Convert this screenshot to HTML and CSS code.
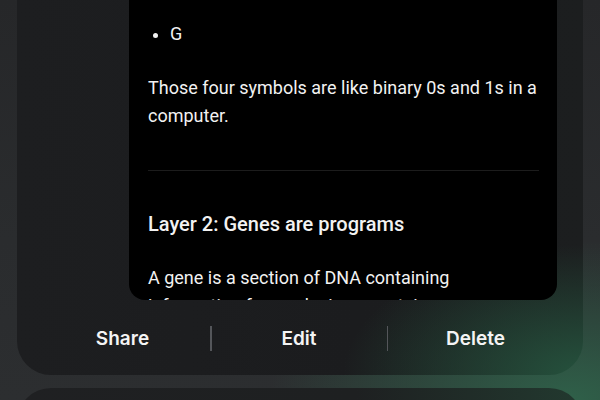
FILE: index.html
```html
<!DOCTYPE html>
<html lang="en">
<head>
<meta charset="utf-8">
<title>Note</title>
<link rel="stylesheet" href="styles.css">
</head>
<body>
  <div class="screen">
    <section class="note-panel">
      <article class="note-card">
        <ul class="note-list">
          <li>G</li>
        </ul>
        <p class="note-text">Those four symbols are like binary 0s and 1s in a computer.</p>
        <hr class="note-rule">
        <h2 class="note-heading">Layer 2: Genes are programs</h2>
        <p class="note-text">A gene is a section of DNA containing information for producing a protein.</p>
      </article>
      <nav class="note-actions">
        <button class="action">Share</button>
        <span class="action-sep"></span>
        <button class="action">Edit</button>
        <span class="action-sep"></span>
        <button class="action">Delete</button>
      </nav>
    </section>
    <section class="next-panel"></section>
  </div>
</body>
</html>
```

FILE: styles.css
```css
html, body {
  margin: 0;
  padding: 0;
  height: 100%;
}

body {
  overflow: hidden;
  background:
    radial-gradient(ellipse 300px 160px at 95% 100%, #2f6049 0%, rgba(47, 96, 73, 0.55) 45%, rgba(47, 96, 73, 0) 100%),
    linear-gradient(180deg, #262729 0%, #2a2c2e 60%, #2c2e30 100%);
  font-family: Roboto, "Noto Sans", sans-serif;
  color: #f2f2f2;
}

.screen {
  display: flex;
  flex-direction: column;
  gap: 13px;
}

.note-panel {
  margin: 0 17px;
  height: 375px;
  display: flex;
  flex-direction: column;
  border-radius: 0 0 34px 34px;
  background:
    radial-gradient(ellipse 240px 130px at 100% 100%, #25523d 0%, rgba(37, 82, 61, 0.55) 45%, rgba(37, 82, 61, 0) 100%),
    linear-gradient(90deg, #1d1e20 0%, #1b1c1e 60%, #1c1e1f 100%);
}

.note-card {
  margin: 0 26px 0 112px;
  height: 300px;
  box-sizing: border-box;
  padding: 20px 18px 0 19px;
  background: #000;
  border-radius: 0 0 16px 16px;
  overflow: hidden;
}

.note-list {
  margin: 0;
  padding: 0 0 0 22px;
  font-size: 18px;
  line-height: 28px;
}

.note-list li::marker {
  font-size: 17px;
}

.note-text {
  margin: 26px 0 0;
  font-size: 18px;
  line-height: 28px;
}

.note-rule {
  margin: 40px 0 0;
  border: 0;
  height: 1px;
  background: #1c1c1c;
}

.note-heading {
  margin: 40px 0 0;
  font-size: 20px;
  line-height: 26px;
  font-weight: 500;
}

.note-heading + .note-text {
  margin-top: 27px;
}

.note-actions {
  flex: 1;
  display: flex;
  align-items: center;
  padding: 2px 20px 0 18px;
}

.action {
  flex: 1;
  background: none;
  border: 0;
  padding: 0;
  font-family: Inter, "Open Sans", sans-serif;
  font-weight: 600;
  font-size: 19px;
  color: #f4f4f4;
}

.action-sep {
  width: 1.5px;
  height: 25px;
  background: #54565a;
}

.next-panel {
  margin: 0 17px;
  height: 60px;
  border-radius: 34px 34px 0 0;
  background: linear-gradient(90deg, #1f2022 0%, #1e2021 60%, #22392f 100%);
}
```
